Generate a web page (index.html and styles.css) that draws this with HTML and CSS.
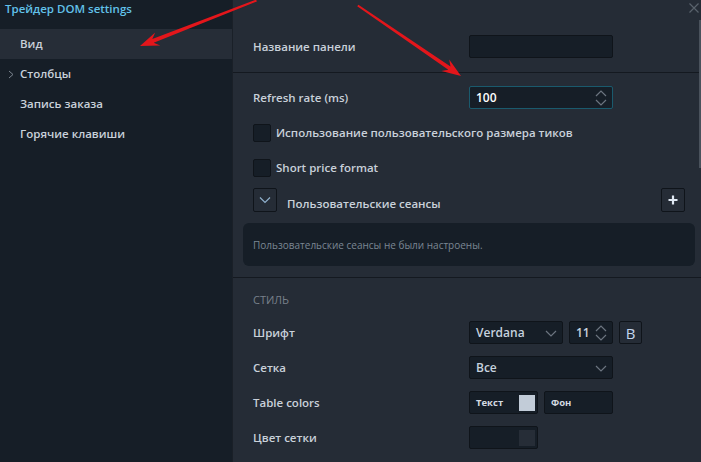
FILE: index.html
```html
<!DOCTYPE html>
<html lang="ru">
<head>
<meta charset="utf-8">
<link rel="stylesheet" href="styles.css">
</head>
<body>
<div class="app">
  <aside class="sidebar">
    <div class="title">Трейдер DOM settings</div>
    <nav class="nav">
      <div class="nav-item active">Вид</div>
      <div class="nav-item"><svg class="nav-chev" width="6" height="9" viewBox="0 0 6 9"><path d="M1 1 L5 4.5 L1 8" fill="none" stroke="#7c8590" stroke-width="1"/></svg>Столбцы</div>
      <div class="nav-item">Запись заказа</div>
      <div class="nav-item">Горячие клавиши</div>
    </nav>
  </aside>
  <main class="content">
    <section class="sec sec-first">
      <div class="row">
        <span class="label">Название панели</span>
        <div class="field w144"></div>
      </div>
    </section>
    <div class="divider"></div>
    <section class="sec sec-second">
      <div class="row">
        <span class="label">Refresh rate (ms)</span>
        <div class="field w144 focus"><span class="val white">100</span>
          <svg class="spin" width="12" height="18" viewBox="0 0 12 18"><path d="M1 7 L6 2 L11 7 M1 11 L6 16 L11 11" fill="none" stroke="#6c7580" stroke-width="1.2"/></svg>
        </div>
      </div>
      <div class="row">
        <label class="check"><span class="box"></span>Использование пользовательского размера тиков</label>
      </div>
      <div class="row">
        <label class="check"><span class="box"></span>Short price format</label>
      </div>
      <div class="row sessions">
        <span class="collapse"><svg width="12" height="8" viewBox="0 0 12 8"><path d="M1 1.5 L6 6.5 L11 1.5" fill="none" stroke="#8fb0cc" stroke-width="1.2"/></svg></span>
        <span class="sess-label">Пользовательские сеансы</span>
        <span class="plus"><svg width="10" height="10" viewBox="0 0 10 10"><path d="M5 0.5 V9.5 M0.5 5 H9.5" stroke="#dfe8f2" stroke-width="2.2"/></svg></span>
      </div>
      <div class="sess-box">Пользовательские сеансы не были настроены.</div>
    </section>
    <div class="divider"></div>
    <section class="sec sec-third">
      <div class="sec-head">СТИЛЬ</div>
      <div class="row">
        <span class="label">Шрифт</span>
        <div class="ctrls">
          <div class="field w94"><span class="val">Verdana</span>
            <svg class="chev" width="12" height="7" viewBox="0 0 12 7"><path d="M1 1 L6 6 L11 1" fill="none" stroke="#6c7580" stroke-width="1.2"/></svg>
          </div>
          <div class="field w44"><span class="val">11</span>
            <svg class="spin" width="12" height="18" viewBox="0 0 12 18"><path d="M1 7 L6 2 L11 7 M1 11 L6 16 L11 11" fill="none" stroke="#6c7580" stroke-width="1.2"/></svg>
          </div>
          <div class="field w23 bold-btn">B</div>
        </div>
      </div>
      <div class="row">
        <span class="label">Сетка</span>
        <div class="field w144"><span class="val">Все</span>
          <svg class="chev" width="12" height="7" viewBox="0 0 12 7"><path d="M1 1 L6 6 L11 1" fill="none" stroke="#6c7580" stroke-width="1.2"/></svg>
        </div>
      </div>
      <div class="row">
        <span class="label">Table colors</span>
        <div class="ctrls">
          <div class="field w69"><span class="small">Текст</span><span class="swatch light"></span></div>
          <div class="field w69"><span class="small">Фон</span></div>
        </div>
      </div>
      <div class="row">
        <span class="label">Цвет сетки</span>
        <div class="field w69"><span class="swatch dark"></span></div>
      </div>
    </section>
    <svg class="close" width="10" height="10" viewBox="0 0 10 10"><path d="M0.5 0.5 L9.5 9.5 M9.5 0.5 L0.5 9.5" stroke="#59626c" stroke-width="1.2"/></svg>
    <div class="scrollbar"></div>
  </main>
  <svg class="arrows" width="701" height="462" viewBox="0 0 701 462">
    <path d="M140 46 L160.2 45.6 L153.7 42.8 L256.9 1.4 L256.1 -0.4 L152.3 39.0 L155.2 32.6 Z" fill="#e3161b"/>
    <path d="M461 76 L449.2 59.5 L450.5 66.4 L358.4 4.7 L357.2 6.3 L448.3 69.8 L441.4 71.1 Z" fill="#e3161b"/>
  </svg>
</div>
</body>
</html>
```
FILE: styles.css
```css
* { box-sizing: border-box; }
html, body { margin: 0; padding: 0; }
body {
  width: 701px;
  height: 462px;
  overflow: hidden;
  background: #252c36;
  font-family: "Open Sans", "Noto Sans", sans-serif;
  font-size: 11.5px;
  font-weight: 600;
  color: #c9d1da;
}
.app {
  position: relative;
  display: grid;
  grid-template-columns: 232px 1fr;
  height: 462px;
}
.sidebar {
  background: #161e27;
}
.title {
  height: 29px;
  line-height: 18px;
  padding-left: 5px;
  color: #62c2ea;
  font-size: 11.5px;
}
.nav-item {
  position: relative;
  height: 30px;
  line-height: 30px;
  padding-left: 20px;
  color: #c9d1da;
}
.nav-item.active { background: #262d37; }
.nav-chev {
  position: absolute;
  left: 8px;
  top: 11px;
}
.content {
  position: relative;
  background: #252c36;
  border-left: 1px solid #1a2028;
}
.sec { padding-left: 20px; padding-right: 16px; }
.sec-first { padding-top: 29px; padding-bottom: 8px; }
.sec-second { padding-top: 7px; padding-bottom: 11px; }
.sec-third { padding-top: 14px; }
.divider { height: 1px; background: #141920; }
.row {
  display: grid;
  grid-template-columns: 216px auto;
  align-items: center;
  height: 35px;
}
.label { color: #c9d1da; }
.ctrls { display: flex; gap: 6px; }
.field {
  position: relative;
  height: 23px;
  background: #161e27;
  border: 1px solid #0f141a;
  border-radius: 2px;
  display: flex;
  align-items: center;
  padding-left: 6px;
}
.field.focus { border-color: #1a5a6d; }
.w144 { width: 144px; }
.w94 { width: 94px; }
.w44 { width: 44px; }
.w23 { width: 23px; }
.w69 { width: 69px; }
.val { color: #c6d2df; font-size: 12px; }
.val.white { color: #ffffff; }
.spin { position: absolute; right: 5px; top: 2px; }
.chev { position: absolute; right: 5px; top: 8px; }
.bold-btn {
  justify-content: center;
  padding-left: 0;
  font-size: 15px;
  font-weight: 400;
  color: #c2d6ee;
  background: #252c36;
}
.small { font-size: 9.5px; font-weight: 700; color: #d4dae1; }
.swatch {
  position: absolute;
  right: 2px;
  top: 3px;
  width: 16px;
  height: 16px;
}
.swatch.light { background: #c2ccd8; }
.swatch.dark { background: #262d37; }
.check {
  display: flex;
  align-items: center;
  gap: 5px;
  grid-column: 1 / 3;
  color: #c9d1da;
}
.box {
  width: 18px;
  height: 18px;
  background: #161e27;
  border: 1px solid #0f141a;
  border-radius: 2px;
}
.sessions {
  display: flex;
  align-items: center;
}
.collapse, .plus {
  width: 24px;
  height: 24px;
  border: 1px solid #0f141a;
  border-radius: 2px;
  display: flex;
  align-items: center;
  justify-content: center;
}
.collapse { margin-top: -6px; }
.plus { margin-left: auto; margin-top: -6px; }
.sess-label { margin-left: 10px; margin-top: 2px; }
.sess-box {
  margin: 3px -10px 0 -10px;
  height: 43px;
  background: #161e27;
  border-radius: 6px;
  padding-left: 10px;
  display: flex;
  align-items: center;
  font-size: 10px;
  font-weight: 400;
  color: #7b8793;
}
.sec-head {
  height: 16px;
  line-height: 16px;
  margin-bottom: 7px;
  color: #78808a;
  font-size: 11px;
  font-weight: 400;
}
.close { position: absolute; right: 2px; top: 3px; }
.scrollbar {
  position: absolute;
  right: 0;
  top: 20px;
  width: 2px;
  height: 148px;
  background: #4a525c;
}
.arrows { position: absolute; left: 0; top: 0; pointer-events: none; }
```
